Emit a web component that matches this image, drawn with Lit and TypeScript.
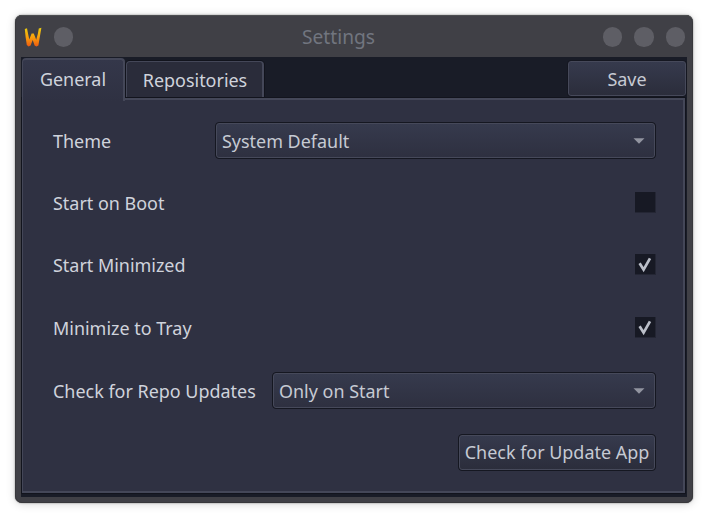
import { LitElement, html, css, svg } from "lit";
import { customElement, property } from "lit/decorators.js";

@customElement("settings-select")
class SettingsSelect extends LitElement {
  @property() value = "";
  static styles = css`
    :host { display: block; height: 37px; }
    .box {
      box-sizing: border-box; height: 37px; border: 1px solid #151721; border-radius: 4px;
      background: #151721;
    }
    .inner {
      box-sizing: border-box; height: 35px; border: 1px solid #46495a; border-radius: 3px;
      background: linear-gradient(#363a4d, #2e3040); display: flex; align-items: center;
      justify-content: space-between; padding: 0 9px 0 5px; color: #c6cad3;
      line-height: 25px; white-space: nowrap;
    }
    span { padding-top: 1px; }
    svg { display: block; }
  `;
  render() {
    return html`<div class="box"><div class="inner"><span>${this.value}</span>
      <svg width="12" height="6" viewBox="0 0 12 6"><path d="M0.5 0.3H11.5L6 5.8Z" fill="#9295a0" /></svg>
    </div></div>`;
  }
}

@customElement("settings-button")
class SettingsButton extends LitElement {
  @property() label = "";
  static styles = css`
    :host {
      display: block; box-sizing: border-box; height: 37px; border: 1px solid #151721;
      border-radius: 4px; background: #151721; line-height: 33px;
    }
    .inner {
      box-sizing: border-box; height: 35px; border: 1px solid #46495a; border-radius: 3px;
      background: linear-gradient(#363a4d, #2b2d3b); color: #c6cad3;
      text-align: center; white-space: nowrap;
    }
  `;
  render() {
    return html`<div class="inner">${this.label}</div>`;
  }
}

@customElement("settings-check")
class SettingsCheck extends LitElement {
  @property({ type: Boolean }) checked = false;
  static styles = css`
    :host {
      display: block; box-sizing: border-box; width: 21px; height: 21px; background: #171924;
      border-right: 1px solid #242634; border-bottom: 1px solid #242634;
    }
    svg { display: block; }
  `;
  render() {
    return html`<svg width="20" height="20" viewBox="0 0 20 20">
      ${this.checked
        ? svg`<path d="M4.6 9.3L8.6 15.6L15 4.3" fill="none" stroke="#bbbfc9" stroke-width="2.7" />`
        : null}
    </svg>`;
  }
}

@customElement("app-root")
class AppRoot extends LitElement {
  static styles = css`
    :host {
      display: block; box-sizing: border-box; width: 708px; height: 517px;
      padding: 15px 15px 14px; background: #fff; overflow: hidden;
      font: 17.95px "Noto Sans", sans-serif; color: #cfd3dc;
    }
    .window {
      box-sizing: border-box; width: 678px; height: 488px; padding: 0 6px 6px;
      background: #404046; border-radius: 7px;
      box-shadow: inset 0 1px 0 #4c4e50, inset 0 0 0 1px #38383c, 0 0 2px rgba(0,0,0,.45), 0 1px 10px rgba(0,0,0,.16);
    }
    .title {
      height: 42px; display: grid; grid-template-columns: 60px 1fr 84px; align-items: center;
    }
    .left { display: flex; align-items: center; gap: 11.5px; padding: 2px 0 0 3px; }
    .name { text-align: center; color: #71757f; padding: 2px 7px 0 0; line-height: 26px; font-size: 19.2px; }
    .right { display: flex; gap: 12px; padding-top: 2px; justify-content: flex-end; padding-right: 2px; }
    .dot { width: 19.5px; height: 19.5px; border-radius: 50%; background: #5e5e65; flex: none; }
    .left svg { display: block; flex: none; }
    .client { height: 440px; background: #191c27; box-sizing: border-box; padding: 0 0 0 1px; }
    .bar { height: 41px; display: flex; align-items: flex-start; }
    .tab { box-sizing: border-box; border: 2px solid #444758; border-bottom: 0; border-radius: 4px 4px 0 0;
      text-align: center; white-space: nowrap; }
    .tab.on {
      position: relative; z-index: 1; width: 103px; height: 43px; margin-top: 1px;
      border-left-width: 1px; background: linear-gradient(#34374a, #2f3142); line-height: 38px;
    }
    .tab.off {
      width: 138px; height: 36px; margin: 4px 0 0 1px; background: #2a2c3a; line-height: 36px;
      border-left-width: 1px; border-top-width: 1px; padding-left: 1px; box-shadow: 0 0 0 1px #12141d;
    }
    .save { width: 120px; margin: 3px 0 0 auto; line-height: 35px; }
    .panel {
      box-sizing: border-box; width: 663px; height: 395px; background: #2f3142;
      border: 2px solid #444758; border-left-width: 1px; padding: 22px 27px 0 30px;
      box-shadow: 0 0 0 1px #12141d;
    }
    .row { display: flex; align-items: center; justify-content: space-between; height: 37px; margin-bottom: 25px; }
    .row span { line-height: 26px; white-space: nowrap; }
    .row.late { margin-bottom: 26px; }
    .theme { width: 441px; }
    .updates { width: 384px; }
    .app { width: 198px; margin-left: auto; }
  `;
  render() {
    return html`<div class="window">
      <div class="title">
        <div class="left">
          <svg width="18" height="20" viewBox="0 0 18 20">
            <defs><linearGradient id="w" x1="0" y1="0" x2="0" y2="1">
              <stop offset="0" stop-color="#e8cc10" /><stop offset=".5" stop-color="#f9a00c" />
              <stop offset="1" stop-color="#ee5a10" />
            </linearGradient></defs>
            <path fill="url(#w)" d="M0.8 2L3 1.2L4 6.5L5.3 12.4L7.6 6.6L9.8 6.6L12.2 12.8L13.8 7L14.8 1.6L17.4 0.8L16 9L14.4 18.6L12.4 19.4L10.6 18.6L8.7 13L6.6 18.6L4.6 19.4L2.8 18L1.6 10Z" />
          </svg>
          <div class="dot"></div>
        </div>
        <div class="name">Settings</div>
        <div class="right"><div class="dot"></div><div class="dot"></div><div class="dot"></div></div>
      </div>
      <div class="client">
        <div class="bar">
          <div class="tab on">General</div>
          <div class="tab off">Repositories</div>
          <settings-button class="save" label="Save"></settings-button>
        </div>
        <div class="panel">
          <div class="row"><span>Theme</span><settings-select class="theme" value="System Default"></settings-select></div>
          <div class="row"><span>Start on Boot</span><settings-check></settings-check></div>
          <div class="row late"><span>Start Minimized</span><settings-check checked></settings-check></div>
          <div class="row late"><span>Minimize to Tray</span><settings-check checked></settings-check></div>
          <div class="row"><span>Check for Repo Updates</span><settings-select class="updates" value="Only on Start"></settings-select></div>
          <settings-button class="app" label="Check for Update App"></settings-button>
        </div>
      </div>
    </div>`;
  }
}
